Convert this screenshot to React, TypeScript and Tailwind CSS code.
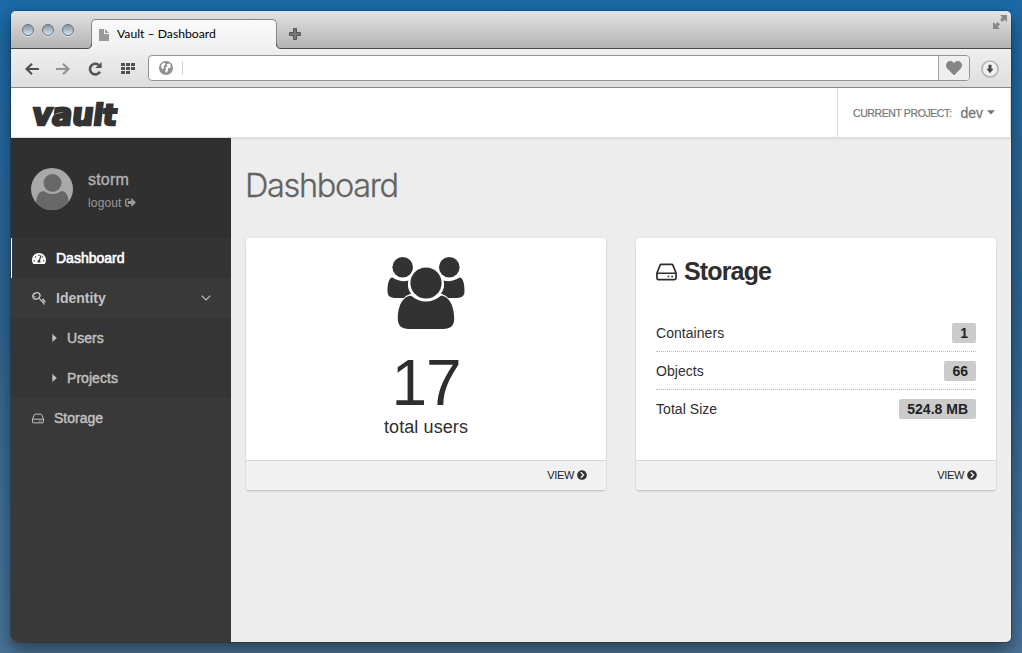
import React from "react";
import { FaSignOutAlt, FaTachometerAlt, FaChevronCircleRight, FaHeart } from "react-icons/fa";

function DriveIcon({ className }: { className: string }) {
  return (
    <svg viewBox="0 0 22 18" className={className} fill="none" stroke="currentColor" strokeWidth="1.8" strokeLinejoin="round">
      <path d="M1 10 L4.2 2 Q4.6 1 5.6 1 H16.4 Q17.4 1 17.8 2 L21 10 V15.4 Q21 17 19.4 17 H2.6 Q1 17 1 15.4 Z M1 10.3 H21" />
      <path d="M12.2 13.7 H14 M16 13.7 H17.8" strokeWidth="1.8" />
    </svg>
  );
}

function KeyIcon() {
  return (
    <svg viewBox="0 0 14 13" className="h-[13px] w-[14px] shrink-0" fill="none" stroke="currentColor">
      <ellipse cx="4.4" cy="3.9" rx="3.6" ry="3" transform="rotate(-28 4.4 3.9)" strokeWidth="1.5" />
      <circle cx="2.9" cy="4.8" r=".8" fill="currentColor" stroke="none" />
      <path d="M6.8 5.8 L12.2 11.8 M9.4 8.6 L11.2 7.2 L12 8.4 M10.9 10.4 L12.4 9 L13.4 10.4 M11.6 10.8 L12.2 12.6" strokeWidth="1.2" />
    </svg>
  );
}

function UsersIcon() {
  return (
    <svg viewBox="0 0 78 73" className="h-[73px] w-[78px]" fill="#323232">
      <circle cx="15.7" cy="10.3" r="10.3" />
      <circle cx="62.3" cy="10.3" r="10.3" />
      <path d="M5.4 20.6 C12 24.8 18 24.7 21.4 23.4 C20 30 22 34 24.2 36.6 C20 38 18 40 16.6 41 H9 C3 41 .5 39 .5 34 C.5 28 1.7 20.6 5.4 20.6Z" />
      <path d="M72.6 20.6 C66 24.8 60 24.7 56.6 23.4 C58 30 56 34 53.8 36.6 C58 38 60 40 61.4 41 H69 C75 41 77.5 39 77.5 34 C77.5 28 76.3 20.6 72.6 20.6Z" />
      <circle cx="39" cy="26" r="15.6" />
      <path d="M24.2 38.7 C32.5 46.4 45.5 46.4 53.8 38.7 C62 38.7 67.2 49 67.2 61.5 Q67.2 72 56.2 72 H21.8 Q10.8 72 10.8 61.5 C10.8 49 16 38.7 24.2 38.7Z" />
    </svg>
  );
}

function TabStrip() {
  return (
    <div className="relative flex h-[38px] shrink-0 items-end border-b border-[#4a4a4a] bg-linear-to-b from-[#e4e4e4] to-[#b3b3b3]">
      <div className="flex gap-2 self-start pt-[13px] pl-[11px]">
        {[0, 1, 2].map((i) => (
          <div key={i} className="h-3 w-3 rounded-full border border-[#66717a] bg-linear-to-b from-[#8595a2] to-[#d6e5ef] shadow-[0_1px_0_#e8e8e8]" />
        ))}
      </div>
      <div className="relative -mb-px ml-[17px] flex h-[30px] w-[186px] items-center rounded-t-[5px] border border-b-0 border-[#858585] bg-linear-to-b from-[#fafafa] to-[#f0f0f0] pl-[7px]">
        <svg viewBox="0 0 5 5" className="absolute bottom-0 -left-[5px] h-[5px] w-[5px]">
          <path d="M5 0 Q5 4.5 0 4.5 V5 H5Z" fill="#f0f0f0" />
          <path d="M4.5 0 Q4.5 4.5 0 4.5" fill="none" stroke="#555" />
        </svg>
        <svg viewBox="0 0 5 5" className="absolute -right-[5px] bottom-0 h-[5px] w-[5px]">
          <path d="M0 0 Q0 4.5 5 4.5 V5 H0Z" fill="#f0f0f0" />
          <path d="M.5 0 Q.5 4.5 5 4.5" fill="none" stroke="#555" />
        </svg>
        <svg viewBox="0 0 10 12" className="h-3 w-[10px]" fill="#999">
          <path d="M0 0 H5 V5 H10 V12 H0Z M6 0 L10 4 H6Z" />
        </svg>
        <span className="ml-2 font-['Lato'] text-[12.2px] leading-none whitespace-nowrap text-black">Vault – Dashboard</span>
      </div>
      <svg viewBox="0 0 12 12" className="mb-[8px] ml-[12px] h-3 w-3" stroke="#555">
        <path d="M4.5 .5 H7.5 V4.5 H11.5 V7.5 H7.5 V11.5 H4.5 V7.5 H.5 V4.5 H4.5Z" fill="#777" />
      </svg>
      <svg viewBox="0 0 14 14" className="mr-1 mb-[19px] ml-auto h-[14px] w-[14px]" fill="#888">
        <path d="M7 0 H14 V7 L11.7 4.7 L9.5 7 L7 4.5 L9.3 2.3Z M0 7 L2.3 9.3 L4.5 7 L7 9.5 L4.7 11.7 L7 14 H0Z" />
      </svg>
    </div>
  );
}

function Toolbar() {
  return (
    <div className="flex h-[39px] shrink-0 items-center border-b border-[#8b8b8b] bg-linear-to-b from-[#efefef] to-[#dedede]">
      <svg viewBox="0 0 14 12" className="mt-px ml-[14px] h-3 w-[14px]" fill="none" stroke="#505050" strokeWidth="2.2">
        <path d="M14 6 H2 M7 .8 L1.6 6 L7 11.2" />
      </svg>
      <svg viewBox="0 0 14 12" className="mt-px ml-[17px] h-3 w-[14px]" fill="none" stroke="#929292" strokeWidth="2.2">
        <path d="M0 6 H12 M7 .8 L12.4 6 L7 11.2" />
      </svg>
      <svg viewBox="0 0 14 14" className="mt-px ml-[18px] h-[14px] w-[14px]" fill="none" stroke="#555" strokeWidth="2.6">
        <path d="M12 9.6 A5.3 5.3 0 1 1 10.6 2.9" />
        <path d="M13.6 0 V6 H7.4Z" fill="#555" stroke="none" />
      </svg>
      <svg viewBox="0 0 14 12" className="mt-px ml-[19px] h-3 w-[14px]" fill="#505050">
        <path d="M0 0h4v3H0zM5 0h4v3H5zM10 0h4v3h-4zM0 4h4v3H0zM5 4h4v3H5zM10 4h4v3h-4zM0 8h4v3H0zM5 8h4v3H5z" />
      </svg>
      <div className="ml-[13px] flex h-[26px] w-[822px] items-center overflow-hidden rounded-[4px] border border-[#939393] bg-white">
        <svg viewBox="0 0 14 14" className="ml-[10px] h-[14px] w-[14px]">
          <circle cx="7" cy="7" r="7" fill="#919191" />
          <path d="M2 4.5 L4 2 L6.5 2.2 L5.8 4.3 L4.4 5.2 L5 7 L4 8.6 L2.4 6.8Z M7.6 3.2 L10.6 2.4 L12 5 L10.8 7.2 L9.2 7 L9 9.5 L7.2 12 L6 10 L7.2 8 L6.5 6.2 L8.4 5.2Z" fill="white" />
        </svg>
        <div className="ml-[9px] h-[14px] w-px bg-[#d5d5d5]" />
        <div className="ml-auto flex h-full w-[31px] items-center justify-center border-l border-[#a6a6a6] bg-[#efefef]">
          <FaHeart className="h-4 w-4 text-[#858585]" />
        </div>
      </div>
      <svg viewBox="0 0 18 18" className="mt-px ml-[11px] h-[18px] w-[18px]">
        <circle cx="9" cy="9" r="8" fill="#f1f1f1" stroke="#b4b4b4" strokeWidth="1.7" />
        <path d="M7.5 4.7 H10.5 V8.7 H12.6 L9 13.2 L5.4 8.7 H7.5Z" fill="#494949" />
      </svg>
    </div>
  );
}

function AppHeader() {
  return (
    <div className="z-10 flex h-[50px] shrink-0 border-r border-b border-[#dcdcdc] bg-white shadow-[0_1px_3px_rgba(0,0,0,0.09)]">
      <svg viewBox="0 0 100 44" className="mt-[4px] ml-[17px] h-[44px] w-[100px]" aria-label="vault">
        <text transform="translate(3.5 33) skewX(-7)" fill="#333" stroke="#333" strokeWidth="2.4" fontFamily="DejaVu Sans Condensed, DejaVu Sans" fontWeight="700" textLength="84" lengthAdjust="spacingAndGlyphs">
          <tspan fontSize="31">vau</tspan><tspan fontSize="29">lt</tspan>
        </text>
      </svg>
      <div className="ml-auto flex w-[173px] items-center border-l border-[#dcdcdc] pl-[15px] text-[#777]">
        <span className="mt-[2px] text-[10.5px] leading-none tracking-[-0.4px] whitespace-nowrap [-webkit-text-stroke:0.2px_#777]">CURRENT PROJECT:</span>
        <span className="ml-[9px] text-[14px] leading-none [-webkit-text-stroke:0.3px_#777]">dev</span>
        <svg viewBox="0 0 8 5" className="ml-[4px] h-[5px] w-2" fill="currentColor">
          <path d="M0 .3 H8 L4 4.6Z" />
        </svg>
      </div>
    </div>
  );
}

function SubItem({ label }: { label: string }) {
  return (
    <div className="flex h-10 items-center bg-[#353535] pl-[41px]">
      <svg viewBox="0 0 5 8" className="h-2 w-[5px]" fill="currentColor">
        <path d="M.3 0 L4.8 4 L.3 8Z" />
      </svg>
      <span className="ml-[10px] leading-none tracking-[0.05px]">{label}</span>
    </div>
  );
}

function Sidebar() {
  return (
    <div className="flex w-[220px] shrink-0 flex-col bg-[#393939] text-[14px] text-[#c2c2c2] [-webkit-text-stroke:0.4px_currentColor]">
      <div className="flex h-[100px] items-center bg-[#303030] pt-[2px] pl-5 text-[#b2b2b2]">
        <svg viewBox="0 0 42 42" className="h-[42px] w-[42px]">
          <defs>
            <clipPath id="avatar"><circle cx="21" cy="21" r="21" /></clipPath>
          </defs>
          <g clipPath="url(#avatar)">
            <rect width="42" height="42" fill="#a9a9a9" />
            <circle cx="21.5" cy="15" r="9" fill="#686868" />
            <path d="M13 23 C17.5 27 25.5 27 30 23 C35 23 37.5 27 38 36 V42 H5 V36 C5.5 27 8 23 13 23Z" fill="#686868" />
          </g>
        </svg>
        <div className="mt-[2px] ml-[15px] flex flex-col gap-[9px]">
          <span className="text-[16px] leading-none tracking-[0.2px]">storm</span>
          <span className="flex items-center text-[12px] leading-none tracking-[0.15px] text-[#999] [-webkit-text-stroke:0]">logout <FaSignOutAlt className="ml-[3px] h-[11px] w-[11px]" /></span>
        </div>
      </div>
      <div className="flex h-10 items-center border-l border-white bg-[#343434] pl-5 text-white">
        <FaTachometerAlt className="h-[13px] w-[14px]" />
        <span className="ml-[10px] leading-none [-webkit-text-stroke:0.6px_white]">Dashboard</span>
      </div>
      <div className="flex h-10 items-center pl-[21px]">
        <KeyIcon />
        <span className="ml-[10px] leading-none font-bold [-webkit-text-stroke:0]">Identity</span>
        <svg viewBox="0 0 10 6" className="mr-5 ml-auto h-[6px] w-[10px]" fill="none" stroke="currentColor" strokeWidth="1.2">
          <path d="M.7 .7 L5 5 L9.3 .7" />
        </svg>
      </div>
      <SubItem label="Users" />
      <SubItem label="Projects" />
      <div className="flex h-10 items-center pl-[21px]">
        <DriveIcon className="h-[11px] w-3" />
        <span className="ml-[10px] leading-none">Storage</span>
      </div>
    </div>
  );
}

function Card({ children }: { children: React.ReactNode }) {
  return (
    <div className="flex h-[252px] w-[360px] flex-col overflow-hidden rounded-[3px] bg-white shadow-[0_1px_2px_rgba(0,0,0,0.23)]">
      <div className="flex-1">{children}</div>
      <div className="flex h-[30px] items-center justify-end border-t border-[#d7d7d7] bg-[#f1f1f1] pr-[19px] text-[11px] text-[#222]">
        <span className="leading-none tracking-[-0.35px]">VIEW</span>
        <FaChevronCircleRight className="mb-px ml-[3px] h-[10px] w-[10px] text-[#333]" />
      </div>
    </div>
  );
}

function StatRow({ label, value, last }: { label: string; value: string; last?: boolean }) {
  return (
    <div className={last ? "flex h-[38px] items-center" : "flex h-[38px] items-center border-b border-dotted border-[#bbb]"}>
      <span className="text-[14px] leading-none tracking-[0.05px]">{label}</span>
      <span className="ml-auto flex h-5 items-center rounded-[2px] bg-[#cbcbcb] px-2 text-[14px] leading-none font-bold text-[#222]">{value}</span>
    </div>
  );
}

export default function App() {
  return (
    <div className="h-[653px] w-[1022px] overflow-hidden bg-linear-to-b from-[#1a69a6] via-[#2f648e] to-[#4a7397] pt-[11px] pl-[11px] font-['Liberation_Sans',sans-serif] text-[#2e2e2e]">
      <div className="flex h-[631px] w-[1000px] flex-col overflow-hidden rounded-[5px] bg-[#ededed] shadow-[0_0_0_1px_rgba(0,20,40,0.25),0_8px_18px_rgba(0,0,0,0.45)]">
        <TabStrip />
        <Toolbar />
        <AppHeader />
        <div className="flex min-h-0 flex-1">
          <Sidebar />
          <div className="flex-1 pt-[30px] pl-[15px]">
            <h1 className="-ml-px h-[70px] font-['Inter'] text-[32.5px] leading-[36px] font-light tracking-[-1.35px] text-[#626262] [-webkit-text-stroke:0.3px_#626262]">Dashboard</h1>
            <div className="flex gap-[30px]">
              <Card>
                <div className="flex flex-col items-center pt-[19px]">
                  <UsersIcon />
                  <span className="mt-[20px] text-[64px] leading-[66px] tracking-[-1px]">17</span>
                  <span className="mt-px text-[18px] leading-5 tracking-[0.1px]">total users</span>
                </div>
              </Card>
              <Card>
                <div className="px-5 pt-[19px]">
                  <div className="flex h-[29px] items-center">
                    <DriveIcon className="h-[18px] w-[21px]" />
                    <span className="ml-[7px] text-[25px] leading-none font-bold tracking-[-0.85px]">Storage</span>
                  </div>
                  <div className="mt-[28px]">
                    <StatRow label="Containers" value="1" />
                    <StatRow label="Objects" value="66" />
                    <StatRow label="Total Size" value="524.8 MB" last />
                  </div>
                </div>
              </Card>
            </div>
          </div>
        </div>
      </div>
    </div>
  );
}
